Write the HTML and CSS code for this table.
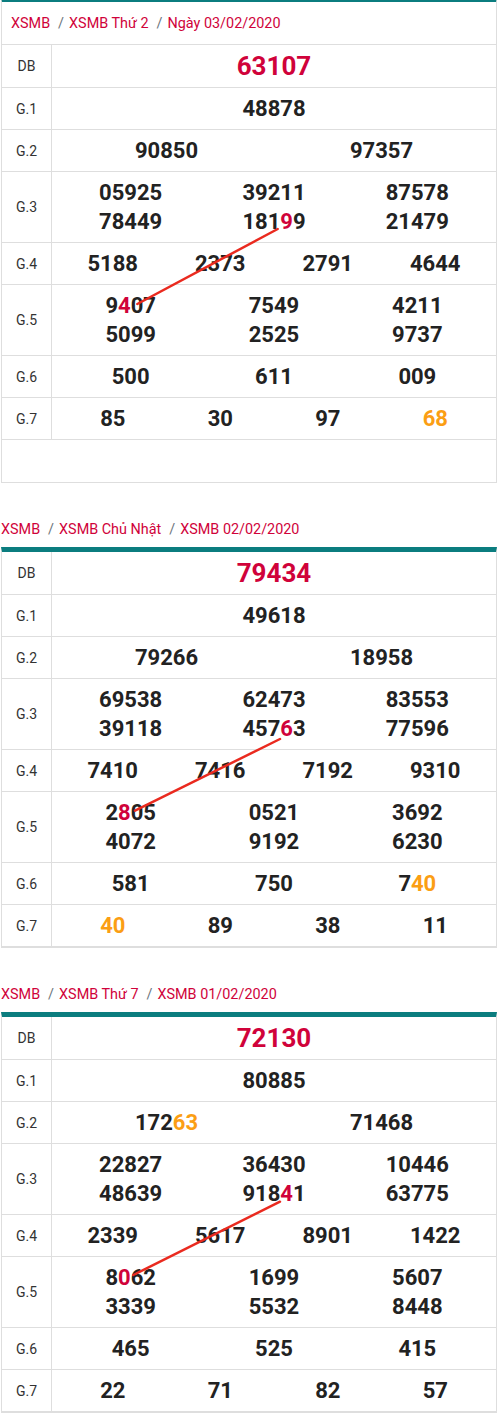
FILE: index.html
```html
<!DOCTYPE html>
<html lang="vi">
<head>
<meta charset="utf-8">
<title>XSMB</title>
<link rel="stylesheet" href="styles.css">
</head>
<body>
<div class="page">

  <section class="box first">
    <div class="head">
      <nav class="crumb">
        <a>XSMB</a><span class="sep">/</span><a>XSMB Thứ 2</a><span class="sep">/</span><a>Ngày 03/02/2020</a>
      </nav>
    </div>
    <div class="rows">
      <div class="row db"><div class="label">DB</div><div class="nums c1"><span>63107</span></div></div>
      <div class="row"><div class="label">G.1</div><div class="nums c1"><span>48878</span></div></div>
      <div class="row"><div class="label">G.2</div><div class="nums c2"><span>90850</span><span>97357</span></div></div>
      <div class="row"><div class="label">G.3</div><div class="nums c3"><span>05925</span><span>39211</span><span>87578</span><span>78449</span><span>181<b class="r">9</b>9</span><span>21479</span></div></div>
      <div class="row"><div class="label">G.4</div><div class="nums c4"><span>5188</span><span>2373</span><span>2791</span><span>4644</span></div></div>
      <div class="row"><div class="label">G.5</div><div class="nums c3"><span>9<b class="r">4</b>07</span><span>7549</span><span>4211</span><span>5099</span><span>2525</span><span>9737</span></div></div>
      <div class="row"><div class="label">G.6</div><div class="nums c3"><span>500</span><span>611</span><span>009</span></div></div>
      <div class="row"><div class="label">G.7</div><div class="nums c4"><span>85</span><span>30</span><span>97</span><span><b class="o">68</b></span></div></div>
      <svg class="trace" width="494" height="395" viewBox="0 0 494 395"><line x1="275.7" y1="184" x2="135.3" y2="259"/></svg>
    </div>
    <div class="empty"></div>
  </section>

  <nav class="crumb outer">
    <a>XSMB</a><span class="sep">/</span><a>XSMB Chủ Nhật</a><span class="sep">/</span><a>XSMB 02/02/2020</a>
  </nav>
  <section class="box">
    <div class="rows">
      <div class="row db"><div class="label">DB</div><div class="nums c1"><span>79434</span></div></div>
      <div class="row"><div class="label">G.1</div><div class="nums c1"><span>49618</span></div></div>
      <div class="row"><div class="label">G.2</div><div class="nums c2"><span>79266</span><span>18958</span></div></div>
      <div class="row"><div class="label">G.3</div><div class="nums c3"><span>69538</span><span>62473</span><span>83553</span><span>39118</span><span>457<b class="r">6</b>3</span><span>77596</span></div></div>
      <div class="row"><div class="label">G.4</div><div class="nums c4"><span>7410</span><span>7416</span><span>7192</span><span>9310</span></div></div>
      <div class="row"><div class="label">G.5</div><div class="nums c3"><span>2<b class="r">8</b>05</span><span>0521</span><span>3692</span><span>4072</span><span>9192</span><span>6230</span></div></div>
      <div class="row"><div class="label">G.6</div><div class="nums c3"><span>581</span><span>750</span><span>7<b class="o">40</b></span></div></div>
      <div class="row"><div class="label">G.7</div><div class="nums c4"><span><b class="o">40</b></span><span>89</span><span>38</span><span>11</span></div></div>
      <svg class="trace" width="494" height="395" viewBox="0 0 494 395"><line x1="278" y1="187" x2="133" y2="258.7"/></svg>
    </div>
  </section>

  <nav class="crumb outer">
    <a>XSMB</a><span class="sep">/</span><a>XSMB Thứ 7</a><span class="sep">/</span><a>XSMB 01/02/2020</a>
  </nav>
  <section class="box">
    <div class="rows">
      <div class="row db"><div class="label">DB</div><div class="nums c1"><span>72130</span></div></div>
      <div class="row"><div class="label">G.1</div><div class="nums c1"><span>80885</span></div></div>
      <div class="row"><div class="label">G.2</div><div class="nums c2"><span>172<b class="o">63</b></span><span>71468</span></div></div>
      <div class="row"><div class="label">G.3</div><div class="nums c3"><span>22827</span><span>36430</span><span>10446</span><span>48639</span><span>918<b class="r">4</b>1</span><span>63775</span></div></div>
      <div class="row"><div class="label">G.4</div><div class="nums c4"><span>2339</span><span>5617</span><span>8901</span><span>1422</span></div></div>
      <div class="row"><div class="label">G.5</div><div class="nums c3"><span>8<b class="r">0</b>62</span><span>1699</span><span>5607</span><span>3339</span><span>5532</span><span>8448</span></div></div>
      <div class="row"><div class="label">G.6</div><div class="nums c3"><span>465</span><span>525</span><span>415</span></div></div>
      <div class="row"><div class="label">G.7</div><div class="nums c4"><span>22</span><span>71</span><span>82</span><span>57</span></div></div>
      <svg class="trace" width="494" height="395" viewBox="0 0 494 395"><line x1="278" y1="184.7" x2="131.3" y2="258"/></svg>
    </div>
  </section>

</div>
</body>
</html>
```

FILE: styles.css
```css
html, body {
  margin: 0;
  padding: 0;
  background: #fff;
}

body {
  font-family: Roboto, "Liberation Sans", Arial, sans-serif;
  color: #222;
}

.page {
  width: 496px;
  margin-left: 1px;
}

.box {
  border: 1px solid #dedede;
  border-top: 5px solid #0b7d7f;
}

.box.first {
  margin-top: -3px;
}

.head {
  padding: 11px 9px 10px;
  border-bottom: 1px solid #dedede;
}

.crumb {
  font-size: 14.4px;
  line-height: 21px;
  color: #d0023a;
  white-space: nowrap;
}

.crumb a {
  color: #d0023a;
  text-decoration: none;
}

.crumb .sep {
  color: #6c757d;
  padding: 0 5px 0 8px;
}

.crumb.outer {
  margin: 36px 0 7px;
}

.rows {
  position: relative;
}

.row {
  display: grid;
  grid-template-columns: 50px 1fr;
  border-bottom: 1px solid #dedede;
}

.label {
  display: flex;
  align-items: center;
  justify-content: center;
  border-right: 1px solid #dedede;
  font-size: 14px;
  color: #333;
}

.nums {
  display: grid;
  padding: 6px 7px;
  text-align: center;
  font-size: 22px;
  line-height: 29px;
  font-weight: 700;
  color: #222;
}

.nums.c1 { grid-template-columns: 1fr; }
.nums.c2 { grid-template-columns: repeat(2, 1fr); }
.nums.c3 { grid-template-columns: repeat(3, 1fr); }
.nums.c4 { grid-template-columns: repeat(4, 1fr); }

.row.db .nums {
  font-size: 26px;
  line-height: 30px;
  color: #d0023a;
}

.nums b {
  font-weight: 700;
}

.nums .r { color: #d0023a; }
.nums .o { color: #fb9e14; }

.empty {
  height: 42px;
}

.trace {
  position: absolute;
  top: 0;
  left: 0;
  pointer-events: none;
}

.trace line {
  stroke: #ea2a1f;
  stroke-width: 2.5;
  stroke-linecap: round;
}
```
